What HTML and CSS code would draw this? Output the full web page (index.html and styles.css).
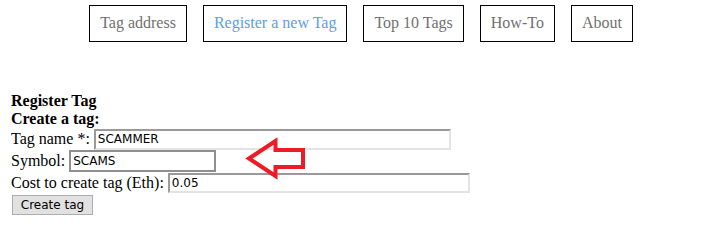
FILE: index.html
```html
<!DOCTYPE html>
<html>
<head>
<meta charset="utf-8">
<link rel="stylesheet" href="styles.css">
</head>
<body>
<nav class="nav">
  <a class="nav-item">Tag address</a>
  <a class="nav-item active">Register a new Tag</a>
  <a class="nav-item">Top 10 Tags</a>
  <a class="nav-item">How-To</a>
  <a class="nav-item">About</a>
</nav>
<main class="content">
  <div class="title">Register Tag</div>
  <div class="title">Create a tag:</div>
  <div class="row"><span class="label">Tag name *:</span><input class="field field-name" type="text" value="SCAMMER"></div>
  <div class="row"><span class="label">Symbol:</span><input class="field field-symbol" type="text" value="SCAMS"></div>
  <div class="row"><span class="label">Cost to create tag (Eth):</span><input class="field field-cost" type="text" value="0.05"></div>
  <div class="row-btn"><button class="btn">Create tag</button></div>
</main>
<svg class="arrow" width="70" height="48" viewBox="240 135 70 48">
  <polygon points="249,158.5 275.5,141 275.5,150 303,150 303,167 275.5,167 275.5,176" fill="none" stroke="#ed1c24" stroke-width="4" stroke-linejoin="miter"/>
</svg>
</body>
</html>
```
FILE: styles.css
```css
html, body {
  margin: 0;
  padding: 0;
  background: #fff;
}
body {
  font-family: "Liberation Serif", "Times New Roman", serif;
  font-size: 16px;
  color: #000;
  width: 725px;
  height: 249px;
  position: relative;
}
.nav {
  display: flex;
  justify-content: center;
  gap: 16px;
  padding-top: 5px;
  padding-right: 3px;
}
.nav-item {
  display: block;
  border: 1px solid #000;
  padding: 8px 10px 9px 10px;
  line-height: 18px;
  color: #707070;
  text-decoration: none;
  white-space: nowrap;
}
.nav-item.active {
  color: #5d9ee4;
}
.content {
  padding: 50px 0 0 11px;
}
.title {
  font-weight: bold;
  line-height: 18px;
}
.row {
  display: flex;
  align-items: center;
  height: 22px;
}
.label {
  white-space: pre;
  margin-right: 4px;
}
.field {
  box-sizing: border-box;
  height: 21px;
  margin: 0;
  padding: 1px 2px;
  border: 2px solid #e3e3e3;
  border-top-color: #9a9a9a;
  border-left-color: #9a9a9a;
  font-family: "DejaVu Sans", Tahoma, sans-serif;
  font-size: 12px;
  color: #000;
  background: #fff;
  outline: none;
}
.field-name { width: 357px; }
.field-symbol {
  width: 147px;
  height: 22px;
  border: 2px solid #8f8f8f;
}
.field-cost { width: 302px; height: 20px; }
.row-btn {
  padding-top: 1px;
}
.btn {
  box-sizing: border-box;
  width: 81px;
  height: 20px;
  margin: 0 0 0 1px;
  padding: 0;
  background: #e1e1e1;
  border: 1px solid #adadad;
  font-family: "DejaVu Sans", Tahoma, sans-serif;
  font-size: 12px;
  color: #000;
}
.arrow {
  position: absolute;
  left: 240px;
  top: 135px;
}
```
